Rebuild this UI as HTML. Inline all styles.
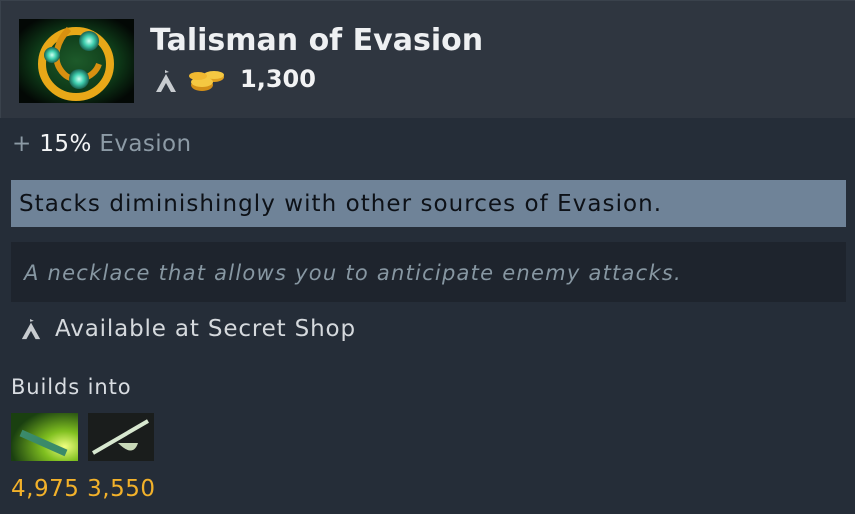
<!DOCTYPE html>
<html><head><style>
*{margin:0;padding:0;box-sizing:border-box}
body{width:855px;height:514px;background:#252d38;font-family:"DejaVu Sans","Liberation Sans",sans-serif;position:relative;overflow:hidden;color:#d9dde2}
.hdr{position:absolute;left:0;top:0;width:855px;height:118px;background:#2f3640;border-top:1px solid #3a424c;border-left:1px solid #3a424c}
.abs{position:absolute;white-space:nowrap}
</style></head><body>
<div class="hdr"></div>
<svg class="abs" style="left:19px;top:19px" width="115" height="84" viewBox="0 0 115 84">
<defs><radialGradient id="g" cx="50%" cy="50%" r="60%"><stop offset="0" stop-color="#1d5a2a"/><stop offset="0.6" stop-color="#0e3a18"/><stop offset="1" stop-color="#030805"/></radialGradient>
<radialGradient id="o" cx="50%" cy="50%" r="50%"><stop offset="0" stop-color="#d0fff0"/><stop offset="0.5" stop-color="#40d0b0"/><stop offset="1" stop-color="#1a6050"/></radialGradient></defs>
<rect width="115" height="84" fill="url(#g)"/>
<ellipse cx="57" cy="45" rx="34" ry="33" fill="none" stroke="#e8a818" stroke-width="8"/>
<path d="M50 10 C40 20 30 40 45 55 C55 65 75 60 80 45" fill="none" stroke="#d89010" stroke-width="6"/>
<circle cx="70" cy="22" r="10" fill="url(#o)"/>
<circle cx="33" cy="36" r="8" fill="url(#o)"/>
<circle cx="60" cy="60" r="10" fill="url(#o)"/>
</svg>
<div class="abs" style="left:150px;top:23px;font-size:30px;font-weight:bold;color:#eef0f2">Talisman of Evasion</div>
<svg class="abs" style="left:154px;top:70px" width="24" height="24" viewBox="0 0 24 24"><path d="M12 4 L22 22 L17 22 L12 13 L7 22 L2 22 Z M11 4 L11 0 L15 2 L11 3" fill="#c8ccd0"/></svg>
<svg class="abs" style="left:188px;top:69px" width="38" height="24" viewBox="0 0 38 24">
<ellipse cx="26" cy="8" rx="10" ry="5" fill="#e0a020"/><ellipse cx="26" cy="6" rx="10" ry="4" fill="#f5c842"/>
<ellipse cx="14" cy="16" rx="11" ry="6" fill="#d49018"/><ellipse cx="14" cy="13" rx="11" ry="5" fill="#f5c842"/>
<ellipse cx="10" cy="7" rx="9" ry="4" fill="#f0b830"/></svg>
<div class="abs" style="left:240px;top:65px;font-size:24px;font-weight:bold;color:#f2f3f4">1,300</div>
<div class="abs" style="left:12px;top:131px;font-size:23px;letter-spacing:0.4px;color:#8c9aa5">+ <span style="color:#f4f5f6">15%</span> Evasion</div>
<div class="abs" style="left:11px;top:180px;width:835px;height:47px;background:#6f8398"></div>
<div class="abs" style="left:19px;top:191px;font-size:23px;letter-spacing:1.05px;color:#0d1117">Stacks diminishingly with other sources of Evasion.</div>
<div class="abs" style="left:11px;top:242px;width:835px;height:60px;background:#1e242d"></div>
<div class="abs" style="left:24px;top:261px;font-size:21px;letter-spacing:1.25px;font-style:italic;color:#8797a2">A necklace that allows you to anticipate enemy attacks.</div>
<svg class="abs" style="left:20px;top:319px" width="22" height="22" viewBox="0 0 24 24"><path d="M12 4 L22 22 L17 22 L12 13 L7 22 L2 22 Z M11 4 L11 0 L15 2 L11 3" fill="#c8ccd0"/></svg>
<div class="abs" style="left:55px;top:316px;font-size:23px;letter-spacing:0.85px;color:#d5d9dd">Available at Secret Shop</div>
<div class="abs" style="left:11px;top:375px;font-size:21px;letter-spacing:0.9px;color:#d9dde2">Builds into</div>
<svg class="abs" style="left:11px;top:413px" width="67" height="48" viewBox="0 0 67 48">
<defs><radialGradient id="a" cx="80%" cy="70%" r="80%"><stop offset="0" stop-color="#f0ff80"/><stop offset="0.4" stop-color="#80c020"/><stop offset="1" stop-color="#1a4010"/></radialGradient></defs>
<rect width="67" height="48" fill="url(#a)"/><path d="M10 20 L55 40" stroke="#3a8a6a" stroke-width="7"/></svg>
<svg class="abs" style="left:88px;top:413px" width="66" height="48" viewBox="0 0 66 48">
<rect width="66" height="48" fill="#1a1d1c"/><path d="M5 40 L60 8" stroke="#d8e8d0" stroke-width="4"/><path d="M30 30 Q45 45 50 30" fill="#c8d8b8"/></svg>
<div class="abs" style="left:11px;top:476px;font-size:23px;letter-spacing:0.5px;color:#f2b12a">4,975 3,550</div>
</body></html>
